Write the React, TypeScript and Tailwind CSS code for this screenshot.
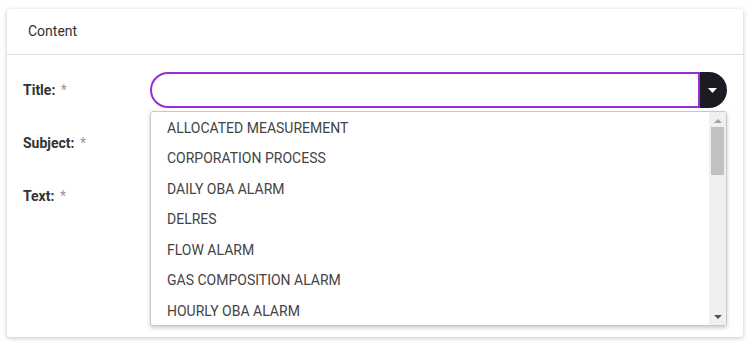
import React from "react";

const options = [
  "ALLOCATED MEASUREMENT",
  "CORPORATION PROCESS",
  "DAILY OBA ALARM",
  "DELRES",
  "FLOW ALARM",
  "GAS COMPOSITION ALARM",
  "HOURLY OBA ALARM",
];

function Label({ text }: { text: string }) {
  return (
    <div className="w-[127px] shrink-0 text-[14px] font-bold text-[#333]">
      {text} <span className="ml-[2px] font-normal text-[#999]">*</span>
    </div>
  );
}

export default function App() {
  return (
    <div className="h-[351px] w-[752px] bg-white pl-[7px] pr-[9px] pt-[9px] font-['Roboto',sans-serif]">
      <div className="h-[328px] rounded-[3px] bg-white shadow-[0_1px_4px_rgba(0,0,0,0.25)]">
        <div className="flex h-[46px] items-center border-b border-[#e0e0e0] px-[21px] text-[14px] text-[#333]">
          Content
        </div>
        <div className="flex flex-col px-[16px] pt-[17px]">
          <div className="flex h-[36px] items-center">
            <Label text="Title:" />
            <div className="relative flex h-[36px] flex-1">
              <div className="h-[36px] flex-1 rounded-l-full border-2 border-[#9b2bd6] bg-white" />
              <div className="flex h-[36px] w-[27px] items-center justify-center rounded-r-full bg-[#1c1b21] pr-[3px]">
                <svg width="9" height="5" viewBox="0 0 9 5">
                  <path d="M0 0h9L4.5 5z" fill="#fff" />
                </svg>
              </div>
              <div className="absolute left-0 right-0 top-[39px] z-10 flex h-[215px] rounded-[3px] border border-[#c8c8c8] bg-white shadow-[0_2px_4px_rgba(0,0,0,0.2)]">
                <ul className="flex-1 pl-[16px] pt-[1px] text-[14px] text-[#444]">
                  {options.map((o) => (
                    <li key={o} className="flex h-[30.5px] items-center">
                      {o}
                    </li>
                  ))}
                </ul>
                <div className="flex w-[17px] flex-col items-center bg-[#f0f0f0]">
                  <svg className="mt-[7px]" width="8" height="4" viewBox="0 0 8 4">
                    <path d="M0 4h8L4 0z" fill="#a3a3a3" />
                  </svg>
                  <div className="mt-[4px] h-[48px] w-[13px] bg-[#c1c1c1]" />
                  <div className="flex-1" />
                  <svg className="mb-[6px]" width="8" height="4" viewBox="0 0 8 4">
                    <path d="M0 0h8L4 4z" fill="#505050" />
                  </svg>
                </div>
              </div>
            </div>
          </div>
          <div className="mt-[17px] flex h-[36px] items-center">
            <Label text="Subject:" />
          </div>
          <div className="mt-[17px] flex h-[36px] items-center">
            <Label text="Text:" />
          </div>
        </div>
      </div>
    </div>
  );
}
